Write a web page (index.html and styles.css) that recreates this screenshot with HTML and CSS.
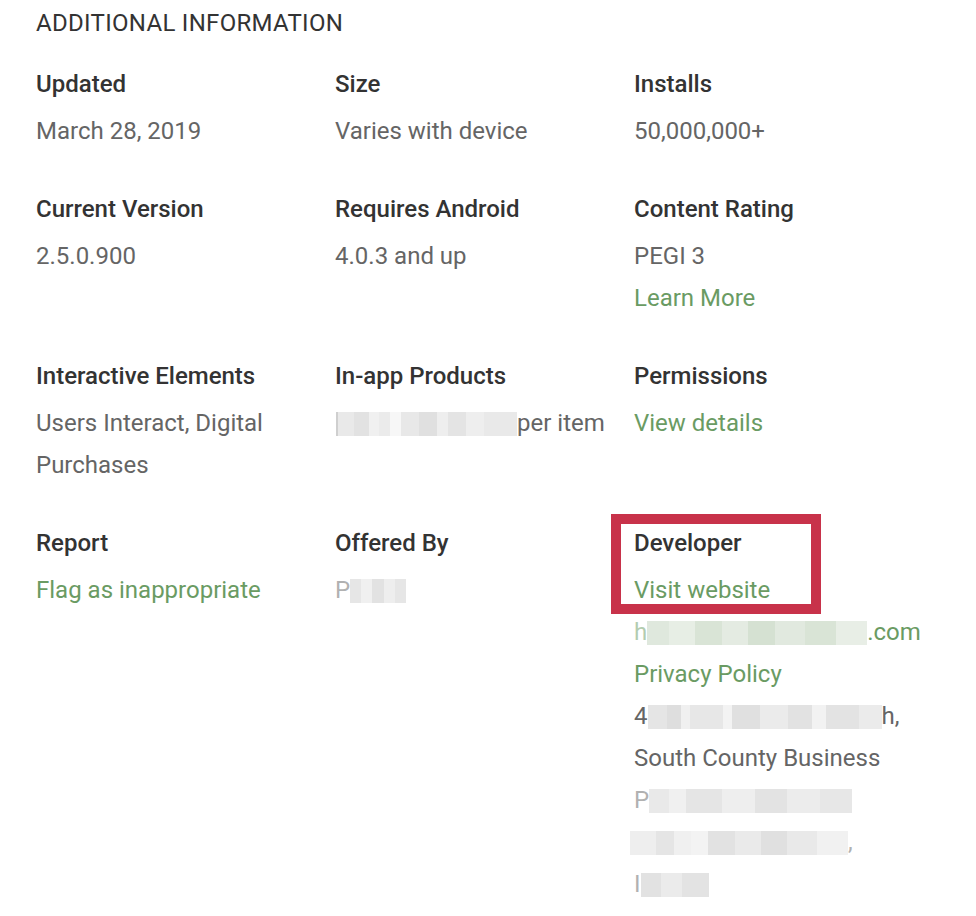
FILE: index.html
```html
<!DOCTYPE html>
<html lang="en">
<head>
    <meta charset="UTF-8">
    <title>Additional Information</title>
    <link rel="stylesheet" href="styles.css">
</head>
<body>
<div class="info">
    <h2 class="info-title">ADDITIONAL INFORMATION</h2>
    <div class="info-grid">
        <div class="cell">
            <div class="label">Updated</div>
            <div class="value">March 28, 2019</div>
        </div>
        <div class="cell">
            <div class="label">Size</div>
            <div class="value">Varies with device</div>
        </div>
        <div class="cell">
            <div class="label">Installs</div>
            <div class="value">50,000,000+</div>
        </div>

        <div class="cell">
            <div class="label">Current Version</div>
            <div class="value">2.5.0.900</div>
        </div>
        <div class="cell">
            <div class="label">Requires Android</div>
            <div class="value">4.0.3 and up</div>
        </div>
        <div class="cell">
            <div class="label">Content Rating</div>
            <div class="value">PEGI 3</div>
            <div class="value"><a href="#" class="link">Learn More</a></div>
        </div>

        <div class="cell">
            <div class="label">Interactive Elements</div>
            <div class="value value-wrap">Users Interact, Digital Purchases</div>
        </div>
        <div class="cell">
            <div class="label">In-app Products</div>
            <div class="value"><span class="blur blur-price"></span>per item</div>
        </div>
        <div class="cell">
            <div class="label">Permissions</div>
            <div class="value"><a href="#" class="link">View details</a></div>
        </div>

        <div class="cell">
            <div class="label">Report</div>
            <div class="value"><a href="#" class="link">Flag as inappropriate</a></div>
        </div>
        <div class="cell">
            <div class="label">Offered By</div>
            <div class="value"><span class="faint">P</span><span class="blur blur-name"></span></div>
        </div>
        <div class="cell">
            <div class="mark"></div>
            <div class="label">Developer</div>
            <div class="value"><a href="#" class="link">Visit website</a></div>
            <div class="value"><a href="#" class="link"><span class="faint">h</span><span class="blur blur-green"></span>.com</a></div>
            <div class="value"><a href="#" class="link">Privacy Policy</a></div>
            <div class="value">4<span class="blur blur-addr1"></span>h,</div>
            <div class="value">South County Business</div>
            <div class="value"><span class="faint">P</span><span class="blur blur-addr2"></span></div>
            <div class="value"><span class="blur blur-addr3"></span><span class="faint">,</span></div>
            <div class="value"><span class="faint">I</span><span class="blur blur-addr4"></span></div>
        </div>
    </div>
</div>
</body>
</html>
```

FILE: styles.css
```css
*{
    padding: 0;
    margin: 0;
    box-sizing: border-box;
}
body{
    background-color: #ffffff;
    font-family: Roboto, "Liberation Sans", Arial, sans-serif;
    font-size: 24px;
    color: #656565;
}
.info{
    padding: 8px 0 0 36px;
}
.info-title{
    font-size: 24px;
    font-weight: 400;
    letter-spacing: 0.3px;
    line-height: 30px;
    color: #333333;
    margin-bottom: 31px;
}
.info-grid{
    display: grid;
    grid-template-columns: 299px 299px 299px;
    row-gap: 42px;
}
.cell{
    position: relative;
}
.label{
    font-weight: 500;
    line-height: 30px;
    color: #333333;
    margin-bottom: 11px;
}
.value{
    line-height: 42px;
    white-space: nowrap;
}
.value-wrap{
    white-space: normal;
}
.link{
    color: #6a9b63;
    text-decoration: none;
}
.faint{
    opacity: 0.5;
}

/* pixelated (hidden) text */
.blur{
    display: inline-block;
    height: 24px;
    vertical-align: -5px;
}
.blur-price{
    width: 181px;
    margin-left: 1px;
    background: linear-gradient(90deg, #cfcfcf 0 1%, #e9e9e9 1% 10%, #e2e2e2 10% 18%, #f0f0f0 18% 24%,
        #ebebeb 24% 30%, #f7f7f7 30% 36%, #e8e8e8 36% 46%, #e0e0e0 46% 56%, #eeeeee 56% 62%,
        #e4e4e4 62% 72%, #eeeeee 72% 82%, #e9e9e9 82% 100%);
}
.blur-name{
    width: 56px;
    background: linear-gradient(90deg, #e6e6e6 0 20%, #f0f0f0 20% 40%, #e2e2e2 40% 60%, #eeeeee 60% 80%, #e6e6e6 80% 100%);
}
.blur-green{
    width: 220px;
    background: linear-gradient(90deg, #dfe8dd 0 10%, #e7eee5 10% 22%, #d9e4d6 22% 34%, #e4ebe2 34% 46%,
        #d5e1d2 46% 58%, #e1e9df 58% 72%, #d9e4d6 72% 86%, #e8eee6 86% 100%);
}
.blur-addr1{
    width: 234px;
    background: linear-gradient(90deg, #e5e5e5 0 8%, #dedede 8% 14%, #f0f0f0 14% 18%, #e7e7e7 18% 32%,
        #f3f3f3 32% 36%, #e0e0e0 36% 48%, #ebebeb 48% 60%, #e2e2e2 60% 70%, #f2f2f2 70% 76%,
        #e3e3e3 76% 90%, #ebebeb 90% 100%);
}
.blur-addr2{
    width: 203px;
    background: linear-gradient(90deg, #e9e9e9 0 10%, #f0f0f0 10% 18%, #e5e5e5 18% 36%, #eeeeee 36% 52%,
        #e3e3e3 52% 68%, #ececec 68% 84%, #e7e7e7 84% 100%);
}
.blur-addr3{
    width: 218px;
    margin-left: -4px;
    background: linear-gradient(90deg, #eeeeee 0 12%, #e5e5e5 12% 20%, #f0f0f0 20% 28%, #f3f3f3 28% 36%,
        #e2e2e2 36% 48%, #eaeaea 48% 60%, #e0e0e0 60% 72%, #e9e9e9 72% 86%, #f1f1f1 86% 100%);
}
.blur-addr4{
    width: 68px;
    background: linear-gradient(90deg, #e2e2e2 0 30%, #ebebeb 30% 60%, #e3e3e3 60% 100%);
}

/* annotation box */
.mark{
    position: absolute;
    left: -23px;
    top: -14px;
    width: 210px;
    height: 100px;
    border: 10px solid #c8324a;
}
```
